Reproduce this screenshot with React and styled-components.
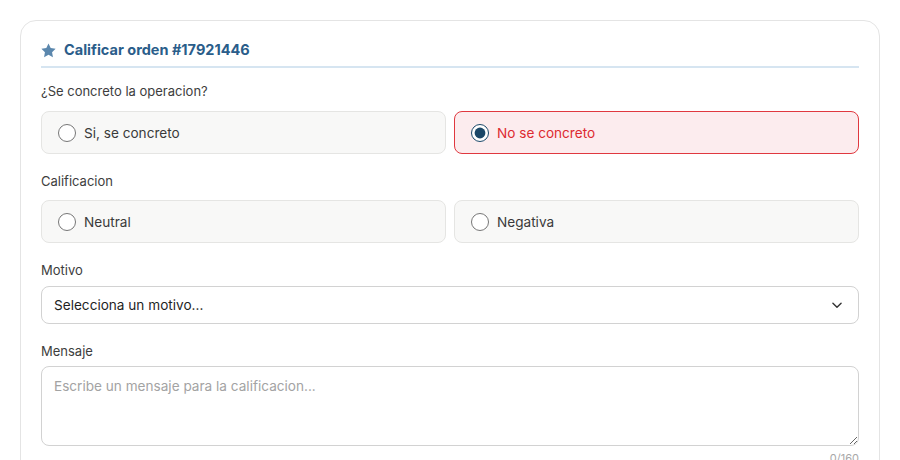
import React from "react";
import styled, { createGlobalStyle } from "styled-components";

const Global = createGlobalStyle`
  html, body { margin: 0; padding: 0; background: #ffffff; }
  body { padding: 20px; font-family: Inter, "Noto Sans", sans-serif; color: #333; }
  * { box-sizing: border-box; }
`;

const Card = styled.section`
  background: #fff;
  border: 1px solid #e4e4e4;
  border-radius: 16px;
  padding: 18px 20px 20px;
`;

const Header = styled.header`
  display: flex;
  align-items: center;
  gap: 8px;
  padding-bottom: 5px;
  border-bottom: 2px solid #d6e5f1;
  margin-bottom: 14px;
`;

const Title = styled.h2`
  margin: 0;
  font-size: 14.5px;
  line-height: 22px;
  font-weight: 700;
  color: #2a5d8a;
`;

const Field = styled.div`
  margin-bottom: 18px;
`;

const Label = styled.div`
  font-size: 13px;
  line-height: 18px;
  color: #3d3d3d;
  margin-bottom: ${(p) => p.$gap || 7}px;
`;

const OptionGrid = styled.div`
  display: grid;
  grid-template-columns: 1fr 1fr;
  gap: 8px;
`;

const Option = styled.label`
  display: flex;
  align-items: center;
  gap: 8px;
  height: 43px;
  padding: 0 16px;
  border-radius: 8px;
  border: 1px solid ${(p) => (p.$active ? "#e0383f" : "#e5e5e3")};
  background: ${(p) => (p.$active ? "#fcecee" : "#f8f8f7")};
  font-size: 13.6px;
  color: ${(p) => (p.$active ? "#dd2a30" : "#3a3a3a")};
  cursor: pointer;
`;

const Radio = styled.input`
  width: 18px;
  height: 18px;
  margin: 0;
  accent-color: #1b4768;
`;

const SelectBox = styled.div`
  display: flex;
  align-items: center;
  justify-content: space-between;
  height: 38px;
  padding: 0 14px 0 12px;
  border: 1px solid #d2d2d2;
  border-radius: 8px;
  font-size: 13.6px;
  color: #1f1f1f;
`;

const TextArea = styled.textarea`
  display: block;
  width: 100%;
  height: 80px;
  padding: 9px 12px;
  border: 1px solid #d2d2d2;
  border-radius: 8px;
  font-family: Inter, "Noto Sans", sans-serif;
  font-size: 13.6px;
  line-height: 20px;
  color: #333;
  &::placeholder { color: #a3a3a3; }
`;

const Counter = styled.div`
  text-align: right;
  font-size: 11px;
  line-height: 13px;
  color: #a8a8a8;
  margin-top: 6px;
`;

const Star = () => (
  <svg width="15" height="15" viewBox="0 0 24 24" fill="#5b87ad">
    <path d="M12 0.8l3.5 7.2 7.9 1.1-5.7 5.6 1.4 7.9L12 18.8l-7.1 3.8 1.4-7.9-5.7-5.6 7.9-1.1z" />
  </svg>
);

const Chevron = () => (
  <svg width="14" height="14" viewBox="0 0 24 24" fill="none" stroke="#333" strokeWidth="2.4" strokeLinecap="round" strokeLinejoin="round">
    <path d="M5 9l7 7 7-7" />
  </svg>
);

export default function App() {
  return (
    <>
      <Global />
      <Card>
        <Header>
          <Star />
          <Title>Calificar orden #17921446</Title>
        </Header>

        <Field>
          <Label $gap={11}>¿Se concreto la operacion?</Label>
          <OptionGrid>
            <Option>
              <Radio type="radio" name="concreto" />
              Si, se concreto
            </Option>
            <Option $active>
              <Radio type="radio" name="concreto" defaultChecked />
              No se concreto
            </Option>
          </OptionGrid>
        </Field>

        <Field>
          <Label $gap={10}>Calificacion</Label>
          <OptionGrid>
            <Option>
              <Radio type="radio" name="calif" />
              Neutral
            </Option>
            <Option>
              <Radio type="radio" name="calif" />
              Negativa
            </Option>
          </OptionGrid>
        </Field>

        <Field>
          <Label $gap={7}>Motivo</Label>
          <SelectBox>
            <span>Selecciona un motivo...</span>
            <Chevron />
          </SelectBox>
        </Field>

        <Field>
          <Label $gap={6}>Mensaje</Label>
          <TextArea placeholder="Escribe un mensaje para la calificacion..." />
          <Counter>0/160</Counter>
        </Field>
      </Card>
    </>
  );
}
